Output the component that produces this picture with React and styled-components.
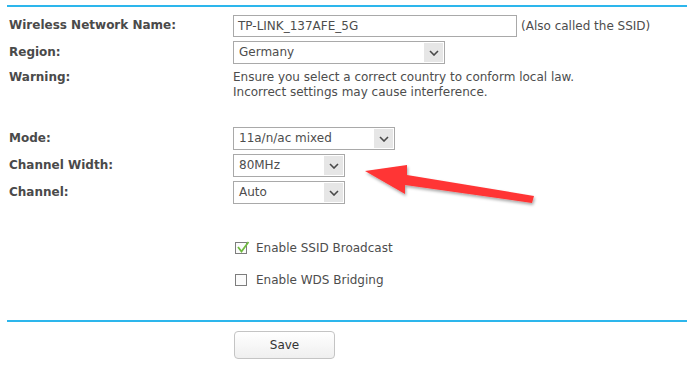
import React from "react";
import styled, { createGlobalStyle } from "styled-components";

const GlobalStyle = createGlobalStyle`
  body {
    margin: 0;
    background: #ffffff;
    font-family: "DejaVu Sans", Verdana, sans-serif;
  }
`;

const Page = styled.div`
  position: relative;
  width: 694px;
  height: 385px;
  padding: 5px 7px 0 7px;
  box-sizing: border-box;
`;

const Divider = styled.div`
  height: 2px;
  background: #2db6ec;
`;

const Form = styled.div`
  display: grid;
  grid-template-columns: 224px 1fr;
  row-gap: 4px;
  padding: 7px 0 0 2px;
`;

const Label = styled.div`
  font-size: 12px;
  font-weight: bold;
  color: #4a4a4a;
  line-height: ${(p) => p.$lh || "23px"};
  margin-top: ${(p) => p.$top || "0"};
`;

const Field = styled.div`
  display: flex;
  align-items: center;
  gap: 4px;
  min-height: 23px;
  margin-top: ${(p) => p.$top || "0"};
`;

const TextInput = styled.div`
  width: 284px;
  height: 22px;
  box-sizing: border-box;
  border: 1px solid #a9a9a9;
  padding-left: 4px;
  font-size: 12px;
  line-height: 20px;
  color: #4d4d4d;
`;

const Hint = styled.span`
  font-size: 12px;
  color: #4d4d4d;
`;

const Select = styled.div`
  display: flex;
  align-items: stretch;
  width: ${(p) => p.$w}px;
  height: 23px;
  box-sizing: border-box;
  border: 1px solid #a9a9a9;
  font-size: 12px;
  color: #4d4d4d;
`;

const SelectValue = styled.div`
  flex: 1;
  padding-left: 5px;
  line-height: 21px;
`;

const SelectArrow = styled.div`
  width: 19px;
  margin: 1px;
  background: #e6e6e6;
  display: flex;
  align-items: center;
  justify-content: center;
`;

const Warning = styled.div`
  font-size: 12px;
  line-height: 15px;
  color: #4d4d4d;
  padding-top: 2px;
`;

const Options = styled.div`
  display: flex;
  flex-direction: column;
  gap: 19px;
  padding: 37px 0 0 228px;
`;

const CheckRow = styled.label`
  display: flex;
  align-items: center;
  gap: 9px;
  font-size: 12px;
  color: #4d4d4d;
  height: 13px;
`;

const Box = styled.span`
  width: 12px;
  height: 12px;
  box-sizing: border-box;
  border: 1px solid #7d7d7d;
  background: #fbfbfb;
  position: relative;
  svg {
    position: absolute;
    left: 0;
    top: -3px;
  }
`;

const Footer = styled.div`
  margin-top: 34px;
`;

const Actions = styled.div`
  padding: 9px 0 0 227px;
`;

const SaveButton = styled.button`
  width: 101px;
  height: 28px;
  border: 1px solid #c4c4c4;
  border-radius: 4px;
  background: linear-gradient(#ffffff, #efefef);
  font-family: "DejaVu Sans", Verdana, sans-serif;
  font-size: 12px;
  color: #333333;
`;

const Arrow = styled.svg`
  position: absolute;
  left: 355px;
  top: 155px;
`;

const Chevron = () => (
  <svg width="10" height="6" viewBox="0 0 10 6">
    <path d="M1 1 L5 5 L9 1" fill="none" stroke="#4a4a4a" strokeWidth="1.6" />
  </svg>
);

const Dropdown = ({ value, width }) => (
  <Select $w={width}>
    <SelectValue>{value}</SelectValue>
    <SelectArrow>
      <Chevron />
    </SelectArrow>
  </Select>
);

const Checkbox = ({ checked, children }) => (
  <CheckRow>
    <Box>
      {checked && (
        <svg width="14" height="14" viewBox="0 0 14 14">
          <path d="M2 7 L5.5 11.5 L12.5 2" fill="none" stroke="#6fba3f" strokeWidth="1.8" />
        </svg>
      )}
    </Box>
    {children}
  </CheckRow>
);

const App = () => {
  return (
    <Page>
      <GlobalStyle />
      <Divider />
      <Form>
        <Label>Wireless Network Name:</Label>
        <Field>
          <TextInput>TP-LINK_137AFE_5G</TextInput>
          <Hint>(Also called the SSID)</Hint>
        </Field>

        <Label>Region:</Label>
        <Field>
          <Dropdown value="Germany" width={212} />
        </Field>

        <Label $lh="15px" $top="2px">Warning:</Label>
        <Warning>
          Ensure you select a correct country to conform local law.
          <br />
          Incorrect settings may cause interference.
        </Warning>

        <Label $top="23px">Mode:</Label>
        <Field $top="23px">
          <Dropdown value="11a/n/ac mixed" width={162} />
        </Field>

        <Label>Channel Width:</Label>
        <Field>
          <Dropdown value="80MHz" width={112} />
        </Field>

        <Label>Channel:</Label>
        <Field>
          <Dropdown value="Auto" width={112} />
        </Field>
      </Form>

      <Options>
        <Checkbox checked>Enable SSID Broadcast</Checkbox>
        <Checkbox>Enable WDS Bridging</Checkbox>
      </Options>

      <Footer>
        <Divider />
      </Footer>
      <Actions>
        <SaveButton>Save</SaveButton>
      </Actions>

      <Arrow width="190" height="55" viewBox="355 155 190 55">
        <defs>
          <filter id="shadow" x="-10%" y="-30%" width="120%" height="160%">
            <feDropShadow dx="1" dy="2" stdDeviation="1.5" floodColor="#000" floodOpacity="0.35" />
          </filter>
        </defs>
        <polygon
          points="365,171 407,165 407,175 534,196 532,203 405,185 405,194"
          fill="#ff3535"
          filter="url(#shadow)"
        />
      </Arrow>
    </Page>
  );
};

export default App;
